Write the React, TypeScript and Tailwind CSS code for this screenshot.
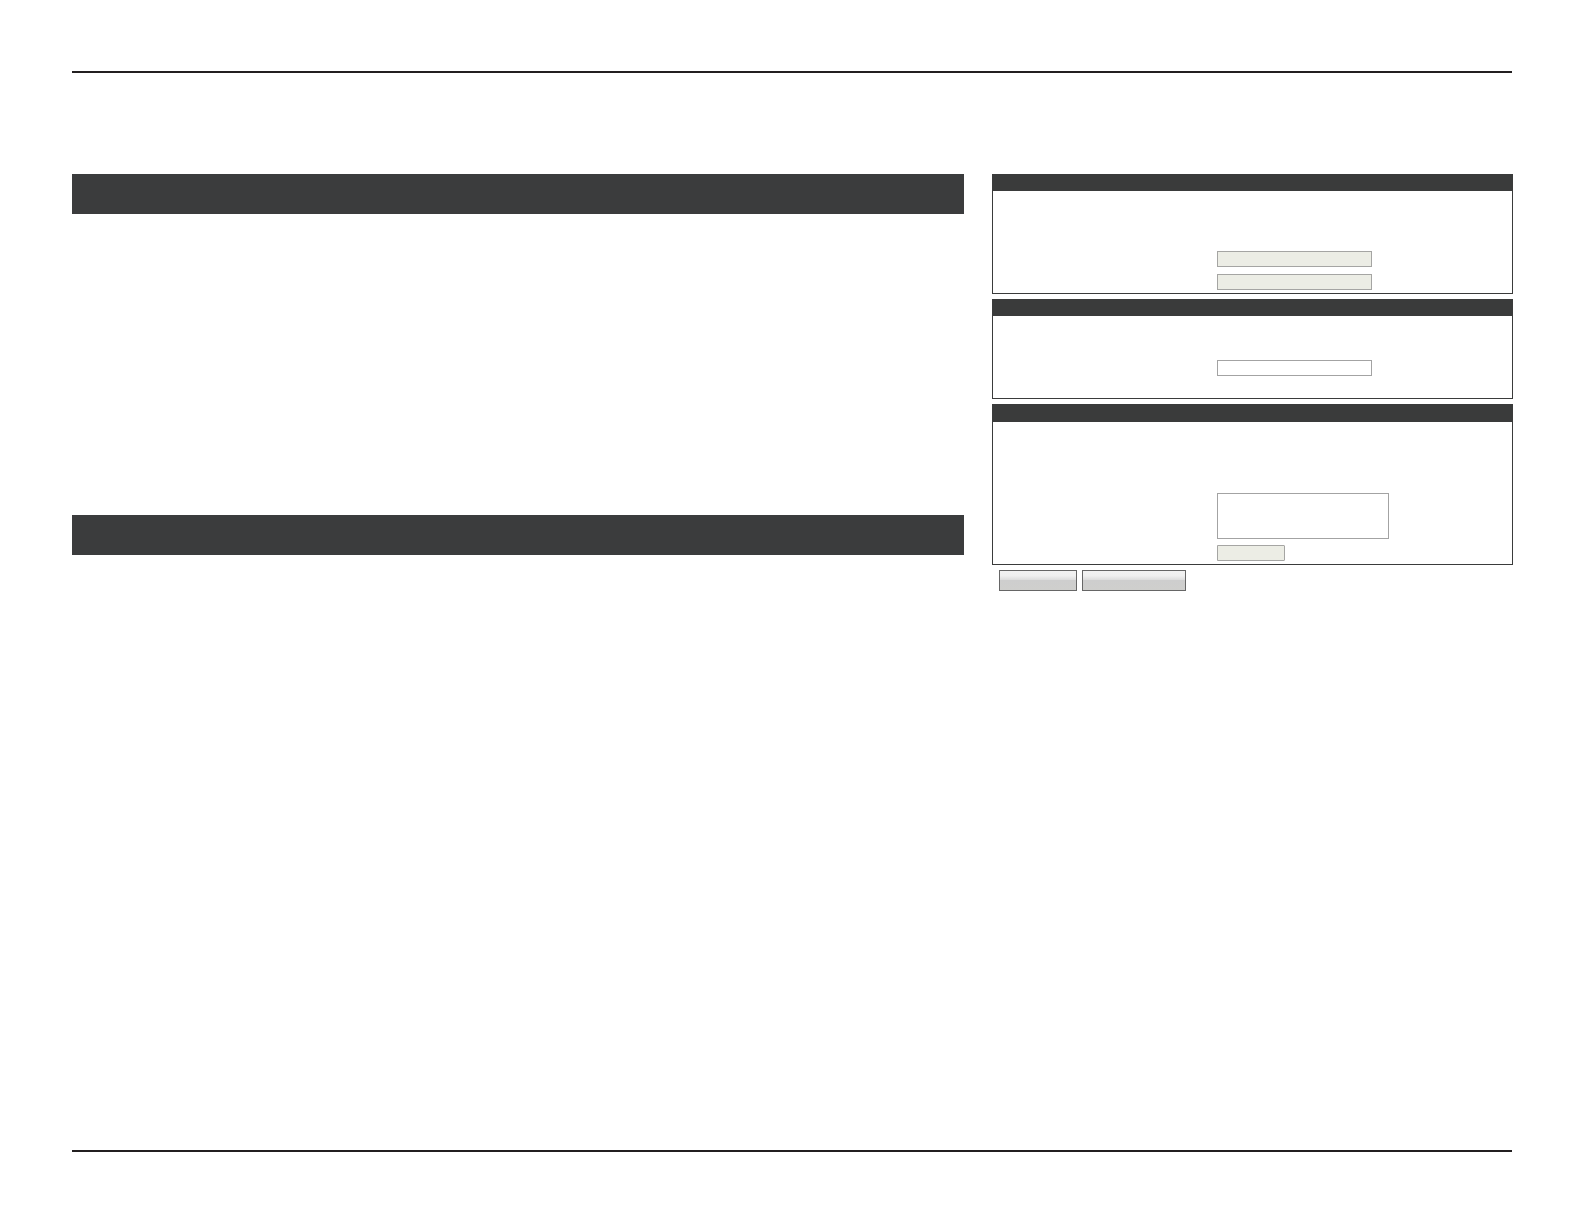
import type { ReactNode } from "react";

const fieldStyles = {
  disabled: "border-[#a5a5a3] bg-[#ecede5]",
  editable: "border-[#a3a3a3] bg-white",
};

function Field({ variant, className }: { variant: keyof typeof fieldStyles; className: string }) {
  return <div className={`border ${fieldStyles[variant]} ${className}`} />;
}

function Panel({ headerClass, bodyClass, children }: { headerClass: string; bodyClass: string; children: ReactNode }) {
  return (
    <section>
      <div className={`bg-[#3a3b3b] ${headerClass}`} />
      <div className={`flex flex-col border border-t-0 border-[#3a3b3b] bg-white pl-56 ${bodyClass}`}>{children}</div>
    </section>
  );
}

const buttons = ["w-[78px]", "w-[104px]"];

export default function App() {
  return (
    <div className="flex h-[1224px] w-[1584px] flex-col bg-white pt-[71px] pl-[72px]">
      <div className="h-0.5 w-[1440px] bg-[#231f20]" />

      <main className="flex h-[1077px] items-start gap-7 pt-[101px]">
        <div className="flex w-[892px] flex-col gap-[301px]">
          <div className="h-10 bg-[#3b3c3d]" />
          <div className="h-10 bg-[#3b3c3d]" />
        </div>

        <div className="flex w-[521px] flex-col gap-[5px]">
          <Panel headerClass="h-[17px]" bodyClass="h-[103px] gap-[7px] pt-[60px]">
            <Field variant="disabled" className="h-4 w-[155px]" />
            <Field variant="disabled" className="h-4 w-[155px]" />
          </Panel>

          <Panel headerClass="h-[17px]" bodyClass="h-[83px] pt-11">
            <Field variant="editable" className="h-4 w-[155px]" />
          </Panel>

          <Panel headerClass="h-[18px]" bodyClass="h-[143px] gap-1.5 pt-[71px]">
            <Field variant="editable" className="h-[46px] w-[172px]" />
            <Field variant="disabled" className="h-4 w-[68px] rounded-r-[1px]" />
          </Panel>

          <div className="flex gap-[5px] pl-[7px]">
            {buttons.map((width) => (
              <button
                key={width}
                type="button"
                className={`h-[21px] border border-[#666666] bg-[linear-gradient(to_bottom,#f2f2f2_0%,#f0f0f0_25%,#dddddd_47%,#cecece_50%,#cfcfcd_100%)] ${width}`}
              />
            ))}
          </div>
        </div>
      </main>

      <div className="h-0.5 w-[1440px] bg-[#231f20]" />
    </div>
  );
}
